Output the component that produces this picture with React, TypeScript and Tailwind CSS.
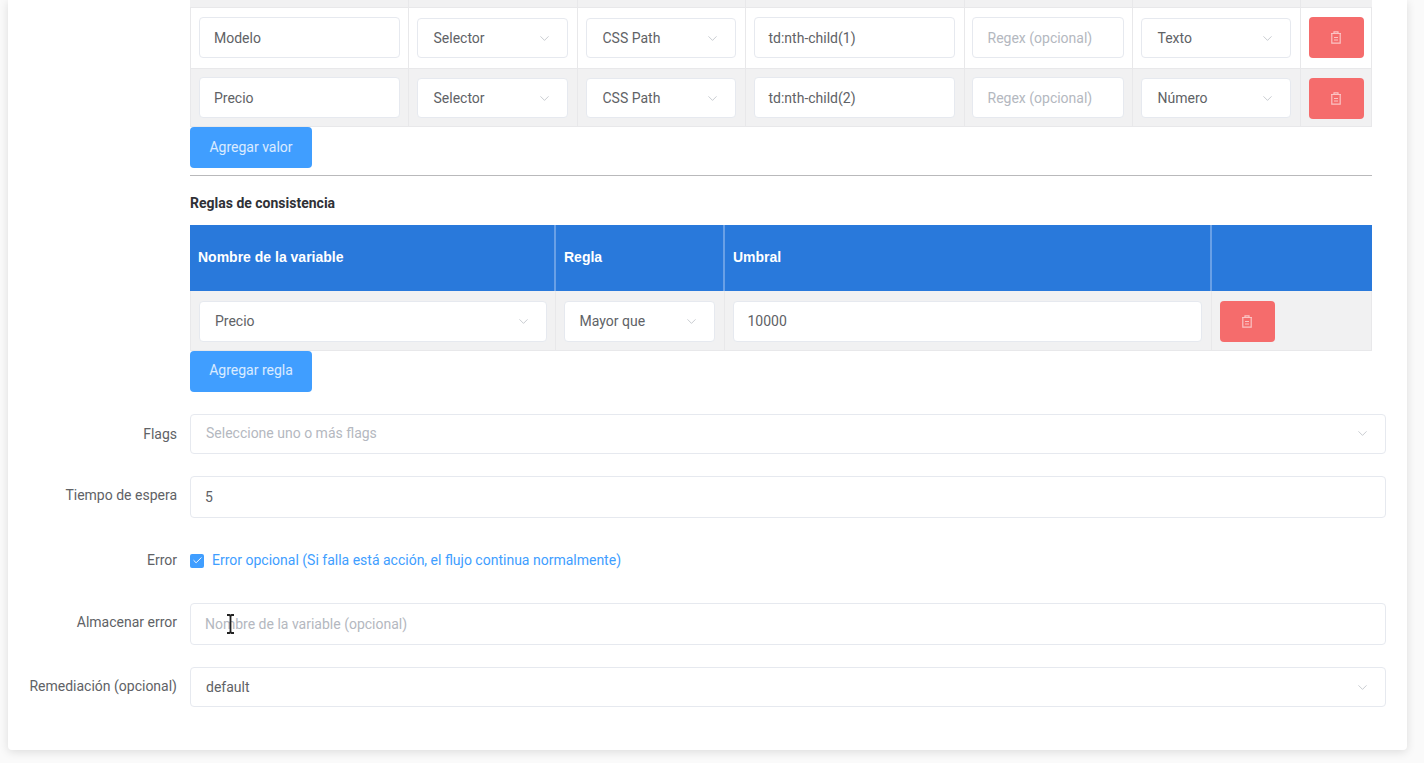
import type { ReactNode } from 'react';
import { ChevronDown, Check } from 'lucide-react';

const fieldBox = 'bg-white border border-[#e6e9ef] rounded-[4px] flex items-center text-[14px] text-[#606266]';

function TrashIcon() {
  return (
    <svg width="14" height="15" viewBox="0 0 14 15" fill="none" stroke="#fbc4c4" strokeWidth="1.2">
      <path d="M2 3.500h10M5 3.500V1.800h4v1.700M2.800 3.500v9.700h8.400V3.500" />
      <path d="M5 7.500h4M5 10h4" />
    </svg>
  );
}

function DeleteButton({ className = '' }: { className?: string }) {
  return (
    <button className={`w-[55px] h-[41px] bg-[#f56c6c] rounded-[4px] flex items-center justify-center ${className}`}>
      <TrashIcon />
    </button>
  );
}

function SelectBox({ value, className = 'h-[41px]' }: { value: string; className?: string }) {
  return (
    <div className={`${fieldBox} justify-between pl-[15px] pr-[15px] pt-[1px] ${className}`}>
      <span>{value}</span>
      <ChevronDown size={15} strokeWidth={1} className="text-[#a9adb5]" />
    </div>
  );
}

function TextBox({ value, placeholder, className = 'pt-[1px]' }: { value?: string; placeholder?: string; className?: string }) {
  return (
    <div className={`${fieldBox} h-[41px] pl-[14px] ${className}`}>
      {value ? <span>{value}</span> : <span className="text-[#b4b8c0]">{placeholder}</span>}
    </div>
  );
}

const valueRows = [
  { name: 'Modelo', path: 'td:nth-child(1)', type: 'Texto', bg: 'bg-white', rowH: 'h-[61px]', sel: 'h-[40px] pl-[16px]', input: 'pt-[1px]' },
  { name: 'Precio', path: 'td:nth-child(2)', type: 'Número', bg: 'bg-[#f1f1f2]', rowH: 'h-[58px]', sel: 'h-[40px] mt-[2px] pl-[16px]', input: 'pt-[2px]' },
];

const cell = 'border-r border-[#e8e8ea] pl-[8px] pr-[9px] align-middle';
const regexCell = 'border-r border-[#e8e8ea] pl-[7px] pr-[8px] align-middle';
const firstCell = 'border-r border-[#e8e8ea] pl-[9px] pr-[8px] align-middle shadow-[inset_1px_0_0_#e8e8ea]';
const lastCell = 'px-[8px] align-middle shadow-[inset_-1px_0_0_#e8e8ea]';

function BlueButton({ children, className = '' }: { children: string; className?: string }) {
  return (
    <button className={`h-[41px] w-[122px] bg-[#409eff] rounded-[4px] text-white/80 text-[14px] flex items-center justify-center ${className}`}>
      {children}
    </button>
  );
}

function FormRow({ label, children, className = '', labelClass = '' }: { label: string; children: ReactNode; className?: string; labelClass?: string }) {
  return (
    <div className={`flex items-center ${className}`}>
      <label className={`w-[169px] text-right text-[14px] text-[#606266] shrink-0 ${labelClass}`}>{label}</label>
      <div className="ml-[13px] w-[1196px]">{children}</div>
    </div>
  );
}

export default function App() {
  return (
    <div className="h-[763px] overflow-hidden bg-[#fafafa] px-[8px] font-['Roboto',sans-serif]">
      <div className="h-[750px] w-[1399px] bg-white rounded-b-[4px] shadow-[0_2px_10px_rgba(0,0,0,0.12)]">
        <div className="ml-[182px] w-[1182px]">
          <table className="table-fixed w-[1182px] border-collapse">
            <colgroup>
              <col className="w-[218px]" />
              <col className="w-[169px]" />
              <col className="w-[168px]" />
              <col className="w-[219px]" />
              <col className="w-[168px]" />
              <col className="w-[168px]" />
              <col className="w-[72px]" />
            </colgroup>
            <tbody>
              <tr className="h-[7px] bg-[#f1f1f2] border-b border-[#e8e8ea]">
                {[0, 1, 2, 3, 4, 5].map((i) => (
                  <td key={i} className="border-r border-[#e8e8ea]" />
                ))}
                <td />
              </tr>
              {valueRows.map((r) => (
                <tr key={r.name} className={`${r.rowH} ${r.bg} border-b border-[#e8e8ea]`}>
                  <td className={firstCell}><TextBox value={r.name} className={r.input} /></td>
                  <td className={cell}><SelectBox value="Selector" className={r.sel} /></td>
                  <td className={cell}><SelectBox value="CSS Path" className={r.sel} /></td>
                  <td className={cell}><TextBox value={r.path} className={r.input} /></td>
                  <td className={regexCell}><TextBox placeholder="Regex (opcional)" className={`${r.input} pl-[15px]`} /></td>
                  <td className={cell}><SelectBox value={r.type} className={r.sel} /></td>
                  <td className={lastCell}><DeleteButton className={r.name === 'Precio' ? 'mt-[2px]' : ''} /></td>
                </tr>
              ))}
            </tbody>
          </table>
          <BlueButton>Agregar valor</BlueButton>
          <hr className="mt-[7px] border-t border-[#b9b9bb]" />
          <p className="mt-[18px] text-[14px] leading-[18px] font-bold text-[#2f3136]">Reglas de consistencia</p>
          <table className="mt-[13px] table-fixed w-[1182px] border-collapse">
            <colgroup>
              <col className="w-[365px]" />
              <col className="w-[169px]" />
              <col className="w-[487px]" />
              <col className="w-[161px]" />
            </colgroup>
            <thead>
              <tr className="h-[66px] bg-[#2979db] text-white text-[14px] font-bold text-left font-['Liberation_Sans',sans-serif]">
                <th className="border-r-2 border-[#69a0e6] px-[8px]">Nombre de la variable</th>
                <th className="border-r-2 border-[#69a0e6] px-[8px]">Regla</th>
                <th className="border-r-2 border-[#69a0e6] px-[8px]">Umbral</th>
                <th />
              </tr>
            </thead>
            <tbody>
              <tr className="h-[60px] bg-[#f1f1f2] border-b border-[#e8e8ea]">
                <td className={firstCell}><SelectBox value="Precio" className="h-[41px] mt-[2px]" /></td>
                <td className={cell}><SelectBox value="Mayor que" className="h-[41px] mt-[2px]" /></td>
                <td className={cell}><TextBox value="10000" className="mt-[2px] pt-[1px]" /></td>
                <td className={lastCell}><DeleteButton className="mt-[2px]" /></td>
              </tr>
            </tbody>
          </table>
          <BlueButton className="pb-[3px]">Agregar regla</BlueButton>
        </div>

        <FormRow label="Flags" className="mt-[22px]">
          <div className={`${fieldBox} h-[40px] justify-between pl-[15px] pr-[15px] pb-[2px]`}>
            <span className="text-[#b4b8c0]">Seleccione uno o más flags</span>
            <ChevronDown size={15} strokeWidth={1} className="text-[#a9adb5]" />
          </div>
        </FormRow>
        <FormRow label="Tiempo de espera" className="mt-[22px]" labelClass="pb-[4px]">
          <div className={`${fieldBox} h-[42px] pl-[14px]`}>5</div>
        </FormRow>
        <FormRow label="Error" className="mt-[32px]">
          <div className="flex items-center gap-[8px] h-[20px]">
            <span className="w-[14px] h-[14px] bg-[#409eff] rounded-[2px] flex items-center justify-center">
              <Check size={11} strokeWidth={2} className="text-white" />
            </span>
            <span className="text-[14px] text-[#409eff]">Error opcional (Si falla está acción, el flujo continua normalmente)</span>
          </div>
        </FormRow>
        <FormRow label="Almacenar error" className="mt-[32px]" labelClass="pb-[4px]">
          <div className={`${fieldBox} relative h-[42px] pl-[14px]`}>
            <span className="text-[#b4b8c0]">Nombre de la variable (opcional)</span>
            <svg className="absolute left-[35px] top-[10px]" width="9" height="20" viewBox="0 0 9 20" fill="none" stroke="#222" strokeWidth="1.8">
              <path d="M1 1h2.400l1.100 1 1.100-1H8M4.500 2v16M1 19h2.400l1.100-1 1.100 1H8" />
            </svg>
          </div>
        </FormRow>
        <FormRow label="Remediación (opcional)" className="mt-[22px]" labelClass="pb-[2px]">
          <div className={`${fieldBox} h-[40px] justify-between pl-[15px] pr-[15px]`}>
            <span>default</span>
            <ChevronDown size={15} strokeWidth={1} className="text-[#a9adb5]" />
          </div>
        </FormRow>
      </div>
    </div>
  );
}
